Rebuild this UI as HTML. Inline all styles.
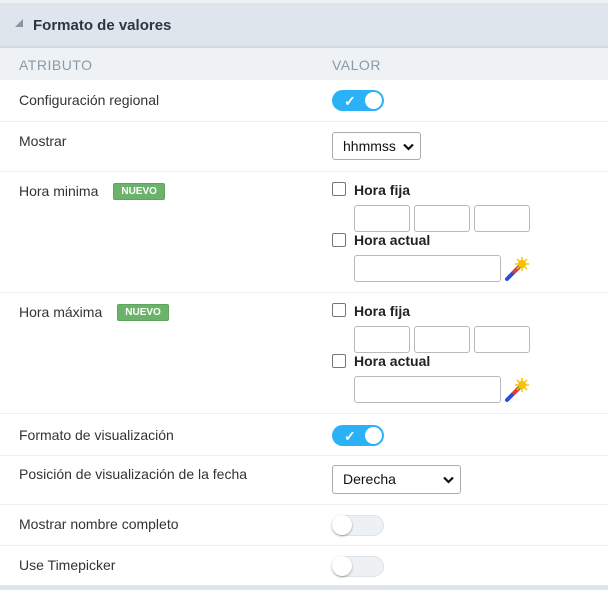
<!DOCTYPE html>
<html><head><meta charset="utf-8"><style>
*{box-sizing:border-box;margin:0;padding:0}
body{width:608px;height:590px;background:#fff;font-family:"Liberation Sans",sans-serif;font-size:14px;color:#333;position:relative;overflow:hidden}
.a{position:absolute}
.hdr{left:0;top:3px;width:608px;height:45px;background:#dfe5ec;border-bottom:2px solid #d0d8e0}
.hdr span{position:absolute;left:33px;top:14px;font-weight:bold;font-size:15px;color:#2e3440}
.tri{left:15px;top:19px;width:0;height:0;border-left:8px solid transparent;border-bottom:8px solid #8c96a0}
.ch{left:0;top:48px;width:608px;height:32px;background:#eef2f5;color:#8a9aa6;font-size:14px;letter-spacing:.5px}
.line{left:0;width:608px;height:1px;background:#eceff2}
.lbl{left:19px;color:#333}
.badge{display:inline-block;background:#6bb36b;color:#fff;font-weight:bold;font-size:10px;padding:2px 7px;border-radius:2px;margin-left:15px;vertical-align:2px;border:1px solid #5ea55e}
.ton{width:52px;height:21px;border-radius:11px;background:#2ab1f6}
.ton:after{content:"";position:absolute;right:2px;top:2px;width:17px;height:17px;border-radius:50%;background:#fff}
.ton i{position:absolute;left:12px;top:3px;color:#fff;font-style:normal;font-weight:bold;font-size:14px}
.toff{width:52px;height:21px;border-radius:11px;background:#eef1f4;border:1px solid #dde3e8}
.toff:after{content:"";position:absolute;left:-1px;top:-1px;width:20px;height:20px;border-radius:50%;background:#fff;box-shadow:0 1px 2px rgba(0,0,0,.35)}
.sel{border:1px solid #a8adb3;border-radius:3px;background:#fff;color:#111;font-size:14px;padding-left:10px;line-height:26px}
.sel svg{position:absolute;right:6px;top:10px}
.cb{width:14px;height:14px;border:1px solid #767676;border-radius:2px;background:#fff}
.bl{font-weight:bold;font-size:14px;color:#222}
.in{height:27px;border:1px solid #b5bac0;border-radius:3px;background:#fff}
</style></head><body>
<div class="a" style="left:0;top:0;width:608px;height:3px;background:#eef1f4"></div>
<div class="a hdr"><span>Formato de valores</span></div>
<div class="a tri"></div>
<div class="a ch"><span class="a" style="left:19px;top:9px">ATRIBUTO</span><span class="a" style="left:332px;top:9px">VALOR</span></div>

<div class="a lbl" style="top:92px">Configuración regional</div>
<div class="a ton" style="left:332px;top:90px"><i>✓</i></div>
<div class="a line" style="top:121px"></div>

<div class="a lbl" style="top:133px">Mostrar</div>
<div class="a sel" style="left:332px;top:132px;width:89px;height:28px">hhmmss<svg width="11" height="8" viewBox="0 0 11 8"><path d="M1 1.5l4.5 4.5 4.5-4.5" stroke="#111" stroke-width="2.2" fill="none"/></svg></div>
<div class="a line" style="top:171px"></div>

<div class="a lbl" style="top:183px">Hora minima<span class="badge">NUEVO</span></div>
<div class="a line" style="top:292px"></div>
<div class="a lbl" style="top:304px">Hora máxima<span class="badge">NUEVO</span></div>
<div class="a line" style="top:413px"></div>

<div class="a cb" style="left:332px;top:182px"></div><div class="a bl" style="left:354px;top:182px">Hora fija</div>
<div class="a in" style="left:354px;top:205px;width:56px"></div><div class="a in" style="left:414px;top:205px;width:56px"></div><div class="a in" style="left:474px;top:205px;width:56px"></div>
<div class="a cb" style="left:332px;top:233px"></div><div class="a bl" style="left:354px;top:232px">Hora actual</div>
<div class="a in" style="left:354px;top:255px;width:147px"></div>
<svg class="a" style="left:504px;top:257px" width="25" height="25" viewBox="0 0 25 25"><path d="M3 22L15 10" stroke="#2a4fd8" stroke-width="4" stroke-linecap="round"/><path d="M9 16L15 10" stroke="#d8402a" stroke-width="4"/><g fill="#f5b800"><circle cx="18" cy="7" r="4"/></g><path d="M18 0v14M11 7h14M13 2l10 10M23 2L13 12" stroke="#f7c400" stroke-width="1.5"/></svg>

<div class="a cb" style="left:332px;top:303px"></div><div class="a bl" style="left:354px;top:303px">Hora fija</div>
<div class="a in" style="left:354px;top:326px;width:56px"></div><div class="a in" style="left:414px;top:326px;width:56px"></div><div class="a in" style="left:474px;top:326px;width:56px"></div>
<div class="a cb" style="left:332px;top:354px"></div><div class="a bl" style="left:354px;top:353px">Hora actual</div>
<div class="a in" style="left:354px;top:376px;width:147px"></div>
<svg class="a" style="left:504px;top:378px" width="25" height="25" viewBox="0 0 25 25"><path d="M3 22L15 10" stroke="#2a4fd8" stroke-width="4" stroke-linecap="round"/><path d="M9 16L15 10" stroke="#d8402a" stroke-width="4"/><g fill="#f5b800"><circle cx="18" cy="7" r="4"/></g><path d="M18 0v14M11 7h14M13 2l10 10M23 2L13 12" stroke="#f7c400" stroke-width="1.5"/></svg>

<div class="a lbl" style="top:427px">Formato de visualización</div>
<div class="a ton" style="left:332px;top:425px"><i>✓</i></div>
<div class="a line" style="top:455px"></div>

<div class="a lbl" style="top:466px">Posición de visualización de la fecha</div>
<div class="a sel" style="left:332px;top:465px;width:129px;height:29px">Derecha<svg width="11" height="8" viewBox="0 0 11 8"><path d="M1 1.5l4.5 4.5 4.5-4.5" stroke="#111" stroke-width="2.2" fill="none"/></svg></div>
<div class="a line" style="top:504px"></div>

<div class="a lbl" style="top:516px">Mostrar nombre completo</div>
<div class="a toff" style="left:332px;top:515px"></div>
<div class="a line" style="top:545px"></div>

<div class="a lbl" style="top:557px">Use Timepicker</div>
<div class="a toff" style="left:332px;top:556px"></div>
<div class="a" style="left:0;top:585px;width:608px;height:5px;background:#dfe5ec"></div>
</body></html>
